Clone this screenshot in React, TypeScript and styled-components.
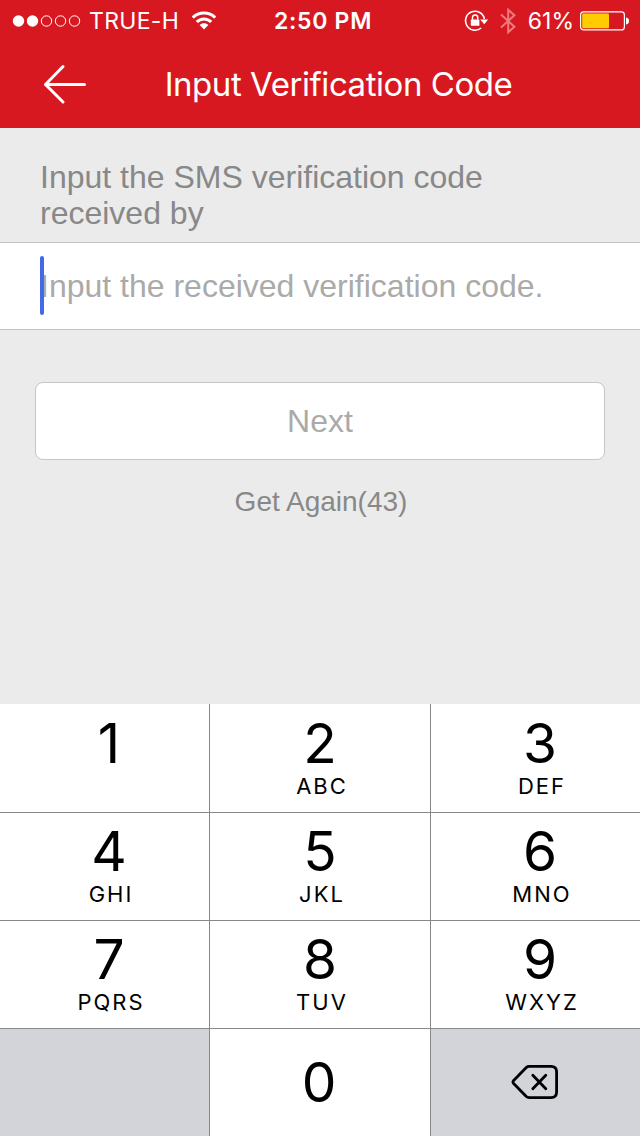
import React from "react";
import styled, { createGlobalStyle } from "styled-components";

const GlobalStyle = createGlobalStyle`
  * { box-sizing: border-box; }
  body { margin: 0; background: #ebebeb; }
`;

const sans = `"Liberation Sans", Arial, sans-serif`;
const system = `Inter, "Liberation Sans", sans-serif`;

const Screen = styled.div`
  width: 640px;
  height: 1136px;
  display: flex;
  flex-direction: column;
  background: #ebebeb;
  font-family: ${sans};
  overflow: hidden;
`;

const Header = styled.header`
  height: 128px;
  background: #d81820;
  color: #fff;
  font-family: ${system};
`;

const StatusBar = styled.div`
  height: 40px;
  display: grid;
  grid-template-columns: 262px 97px 1fr;
  align-items: center;
  padding: 1px 11px 0 12px;
`;

const StatusGroup = styled.div<{ $end?: boolean }>`
  display: flex;
  align-items: center;
  justify-content: ${(p) => (p.$end ? "flex-end" : "flex-start")};
  svg { display: block; flex: none; }
`;

const StatusText = styled.span`
  padding-top: 2px;
  font-size: 23px;
  line-height: 37px;
  font-weight: 400;
  white-space: nowrap;
`;

const Time = styled(StatusText)`
  font-weight: 600;
  letter-spacing: 0.7px;
`;

const Carrier = styled(StatusText)`
  margin: 0 12px 0 8px;
  letter-spacing: 0.3px;
`;

const Percent = styled(StatusText)`
  margin: 0 6px 0 12px;
`;

const Bluetooth = styled(BluetoothGlyph)`
  margin-left: 11px;
`;

const NavBar = styled.div`
  height: 88px;
  display: grid;
  grid-template-columns: 130px 1fr 93px;
  align-items: center;
`;

const BackButton = styled.button`
  border: 0;
  padding: 0 0 0 42px;
  background: none;
  height: 88px;
  display: flex;
  align-items: center;
  svg { display: block; }
`;

const Title = styled.h1`
  margin: 0;
  font-size: 33px;
  font-weight: 400;
  line-height: 88px;
  letter-spacing: -0.45px;
  text-align: center;
  white-space: nowrap;
`;

const Form = styled.main`
  flex: 1;
`;

const Hint = styled.p`
  margin: 0;
  height: 114px;
  padding: 31px 120px 0 40px;
  font-size: 32px;
  line-height: 36px;
  color: #888;
`;

const Field = styled.div`
  height: 88px;
  display: flex;
  align-items: center;
  padding-left: 40px;
  background: #fff;
  border: solid #c4c4c4;
  border-width: 1px 0;
`;

const Caret = styled.span`
  width: 4px;
  height: 59px;
  margin-right: -4px;
  margin-bottom: 1px;
  border-radius: 2px;
  background: #4169e8;
  z-index: 1;
`;

const Placeholder = styled.span`
  font-size: 32px;
  line-height: 86px;
  color: #aaa;
  white-space: nowrap;
`;

const NextButton = styled.button`
  display: block;
  width: 570px;
  height: 78px;
  margin: 52px 35px 0;
  padding: 0;
  border: 1px solid #c6c6c6;
  border-radius: 8px;
  background: #fff;
  color: #aaa;
  font: 32px/76px ${sans};
`;

const Resend = styled.div`
  margin-top: 22px;
  padding-left: 2px;
  font-size: 28px;
  line-height: 40px;
  color: #888;
  text-align: center;
`;

const Keypad = styled.div`
  display: grid;
  grid-template-columns: 209px 220px 209px;
  grid-template-rows: 108px 107px 107px 107px;
  gap: 1px;
  background: #87888a;
  font-family: ${system};
  color: #000;
`;

const Key = styled.div<{ $side?: boolean; $muted?: boolean; $middle?: boolean }>`
  display: flex;
  flex-direction: column;
  align-items: center;
  justify-content: ${(p) => (p.$middle ? "center" : "flex-end")};
  padding: 0 ${(p) => (p.$middle ? "2px 2px 0" : p.$side ? "0 13px 9px" : "0 13px 0")};
  background: ${(p) => (p.$muted ? "#d2d4d9" : "#fff")};
  svg { display: block; }
`;

const Digit = styled.span`
  font-size: 55px;
  line-height: 56px;
`;

const Letters = styled.span`
  height: 26px;
  margin-top: 2px;
  padding-left: 4px;
  font-size: 22px;
  font-weight: 400;
  line-height: 26px;
  letter-spacing: 2px;
`;

const keys = [
  ["1", ""], ["2", "ABC"], ["3", "DEF"],
  ["4", "GHI"], ["5", "JKL"], ["6", "MNO"],
  ["7", "PQRS"], ["8", "TUV"], ["9", "WXYZ"],
];

const SignalDots = () => (
  <svg width="69" height="14" viewBox="0 0 69 14" fill="none" stroke="#fff">
    <circle cx="6.5" cy="7" r="5.7" fill="#fff" stroke="none" />
    <circle cx="20.5" cy="7" r="5.7" fill="#fff" stroke="none" />
    <circle cx="34.5" cy="7" r="5.2" />
    <circle cx="48.5" cy="7" r="5.2" />
    <circle cx="62.5" cy="7" r="5.2" />
  </svg>
);

const Wifi = () => (
  <svg width="26" height="20" viewBox="0 0 26 20" fill="none" stroke="#fff" strokeWidth="3.1">
    <path d="M1.8 6.6C8 0.5 18 0.5 24.2 6.6" />
    <path d="M5.8 11C9.8 6.9 16.2 6.9 20.2 11" />
    <path d="M13 18.4L8.6 14C11.1 11.7 14.9 11.7 17.4 14Z" fill="#fff" stroke="none" />
  </svg>
);

const RotationLock = () => (
  <svg width="25" height="24" viewBox="0 0 25 24" fill="none" stroke="#fff">
    <path d="M17.2 19A9.5 9.5 0 1 1 20.4 10" strokeWidth="1.6" />
    <path d="M16.2 10.6H24.2L20.2 15.2Z" fill="#fff" stroke="none" />
    <rect x="6.8" y="10.4" width="8.6" height="6.4" rx="0.6" fill="#fff" stroke="none" />
    <path d="M8.5 10.8V8.6a2.6 2.6 0 0 1 5.2 0V10.8" strokeWidth="1.5" />
  </svg>
);

function BluetoothGlyph({ className }: { className?: string }) {
  return (
    <svg className={className} width="16" height="28" viewBox="0 0 16 28" fill="none" stroke="#f07c80" strokeWidth="2">
      <path d="M1 7.5L14.4 19.8L8.2 25.2V2.8L14.4 8.2L1 20.5" />
    </svg>
  );
}

const Battery = () => (
  <svg width="49" height="20" viewBox="0 0 49 20" fill="none">
    <rect x="0.6" y="0.9" width="43.8" height="18" rx="3" stroke="#fff" strokeWidth="1.2" />
    <rect x="2.2" y="2.5" width="26.8" height="14.8" rx="1" fill="#ffcc00" />
    <path d="M46 6.5C48.4 7 49 8.4 49 10S48.4 13 46 13.5Z" fill="#fff" />
  </svg>
);

const BackArrow = () => (
  <svg width="46" height="42" viewBox="0 0 46 42" fill="none" stroke="#fff" strokeWidth="3" strokeLinecap="round" strokeLinejoin="round">
    <path d="M21 3.5L3.5 21.5L21 39M3.5 21.5H42.5" />
  </svg>
);

const Backspace = () => (
  <svg width="48" height="36" viewBox="0 0 48 36" fill="none" stroke="#000" strokeWidth="2.8" strokeLinecap="round" strokeLinejoin="round">
    <path d="M18.2 2.4H40Q45.6 2.4 45.6 8V28Q45.6 33.6 40 33.6H18.2Q16.5 33.6 15.3 32.5L2.4 19.2Q1.5 18 2.4 16.8L15.3 3.5Q16.5 2.4 18.2 2.4Z" />
    <path d="M21.8 11.3L34.8 24.7M34.8 11.3L21.8 24.7" />
  </svg>
);

export default function App() {
  return (
    <Screen>
      <GlobalStyle />
      <Header>
        <StatusBar>
          <StatusGroup>
            <SignalDots />
            <Carrier>TRUE-H</Carrier>
            <Wifi />
          </StatusGroup>
          <Time>2:50 PM</Time>
          <StatusGroup $end>
            <RotationLock />
            <Bluetooth />
            <Percent>61%</Percent>
            <Battery />
          </StatusGroup>
        </StatusBar>
        <NavBar>
          <BackButton aria-label="Back">
            <BackArrow />
          </BackButton>
          <Title>Input Verification Code</Title>
        </NavBar>
      </Header>
      <Form>
        <Hint>Input the SMS verification code received by</Hint>
        <Field>
          <Caret />
          <Placeholder>Input the received verification code.</Placeholder>
        </Field>
        <NextButton>Next</NextButton>
        <Resend>Get Again(43)</Resend>
      </Form>
      <Keypad>
        {keys.map(([digit, letters], i) => (
          <Key key={digit} $side={i % 3 !== 1}>
            <Digit>{digit}</Digit>
            <Letters>{letters}</Letters>
          </Key>
        ))}
        <Key $muted />
        <Key $middle>
          <Digit>0</Digit>
        </Key>
        <Key $muted $middle>
          <Backspace />
        </Key>
      </Keypad>
    </Screen>
  );
}
